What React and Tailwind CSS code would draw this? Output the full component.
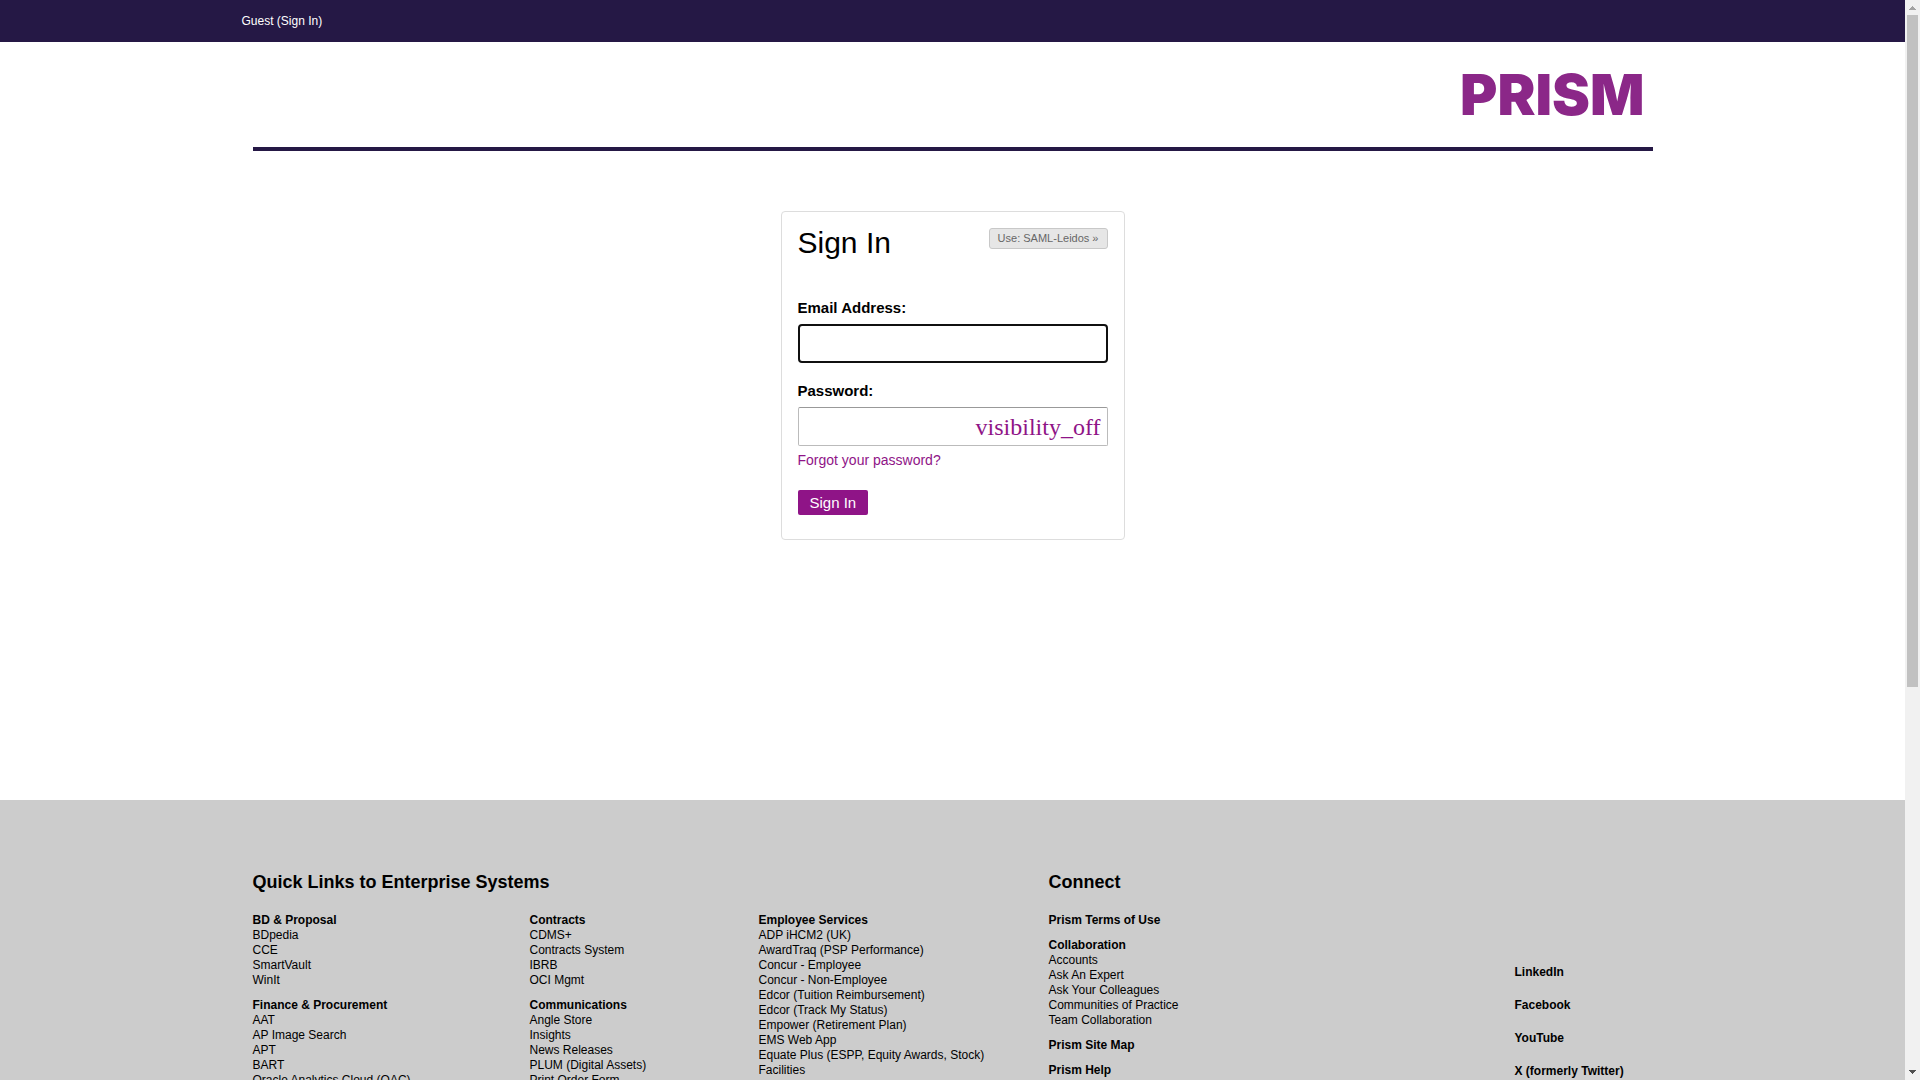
import { useState } from 'react';

const quickLinks = [
    {
        width: 'w-[277px]',
        groups: [
            { title: 'BD & Proposal', links: ['BDpedia', 'CCE', 'SmartVault', 'WinIt'] },
            {
                title: 'Finance & Procurement',
                links: ['AAT', 'AP Image Search', 'APT', 'BART', 'Oracle Analytics Cloud (OAC)'],
            },
        ],
    },
    {
        width: 'w-[229px]',
        groups: [
            { title: 'Contracts', links: ['CDMS+', 'Contracts System', 'IBRB', 'OCI Mgmt'] },
            {
                title: 'Communications',
                links: ['Angle Store', 'Insights', 'News Releases', 'PLUM (Digital Assets)', 'Print Order Form'],
            },
        ],
    },
    {
        width: 'w-[290px]',
        groups: [
            {
                title: 'Employee Services',
                links: [
                    'ADP iHCM2 (UK)',
                    'AwardTraq (PSP Performance)',
                    'Concur - Employee',
                    'Concur - Non-Employee',
                    'Edcor (Tuition Reimbursement)',
                    'Edcor (Track My Status)',
                    'Empower (Retirement Plan)',
                    'EMS Web App',
                    'Equate Plus (ESPP, Equity Awards, Stock)',
                    'Facilities',
                ],
            },
        ],
    },
];

const connectGroups = [
    { title: 'Prism Terms of Use', links: [] },
    {
        title: 'Collaboration',
        links: ['Accounts', 'Ask An Expert', 'Ask Your Colleagues', 'Communities of Practice', 'Team Collaboration'],
    },
    { title: 'Prism Site Map', links: [] },
    { title: 'Prism Help', links: [] },
];

const socialLinks = ['LinkedIn', 'Facebook', 'YouTube', 'X (formerly Twitter)'];

function LinkGroup({ title, links }) {
    return (
        <div>
            <h3 className="font-bold">
                {links.length > 0 ? title : <a href="#">{title}</a>}
            </h3>
            <ul>
                {links.map((link) => (
                    <li key={link}>
                        <a href="#">{link}</a>
                    </li>
                ))}
            </ul>
        </div>
    );
}

function TopBar() {
    return (
        <nav className="h-[42px] shrink-0 bg-[#251845] text-xs text-white">
            <div className="mx-auto flex h-full max-w-[1422px] items-center">
                <span>
                    Guest (<a href="#">Sign In</a>)
                </span>
            </div>
        </nav>
    );
}

function Header() {
    return (
        <header className="mx-auto flex h-[109px] w-full max-w-[1400px] shrink-0 items-start justify-end border-b-4 border-[#251845] pt-[25px] pr-2">
            <a href="#" className="font-['Inter',sans-serif] text-[57px] leading-[56px] font-black text-[#8b2788]">
                PRISM
            </a>
        </header>
    );
}

function SignInForm() {
    const [email, setEmail] = useState('');
    const [password, setPassword] = useState('');
    const [showPassword, setShowPassword] = useState(false);

    return (
        <form
            onSubmit={(e) => e.preventDefault()}
            className="mx-auto w-[344px] rounded-[4px] border border-[#dddddd] px-4 pt-4 pb-6"
        >
            <div className="flex items-start justify-between">
                <h1 className="text-[30px] leading-[30px]">Sign In</h1>
                <button
                    type="button"
                    className="h-[21px] rounded-[3px] border border-[#c8c8c8] bg-[#e6e6e6] px-2 text-[11px] leading-[19px] text-[#666666]"
                >
                    Use: SAML-Leidos »
                </button>
            </div>

            <label htmlFor="email" className="mt-[38px] block text-[15px] leading-6 font-bold">
                Email Address:
            </label>
            <input
                id="email"
                type="email"
                value={email}
                onChange={(e) => setEmail(e.target.value)}
                className="mt-1 block h-[39px] w-full rounded-[4px] border-2 border-[#101010] px-2 outline-none"
            />

            <label htmlFor="password" className="mt-4 block text-[15px] leading-6 font-bold">
                Password:
            </label>
            <div className="mt-1 flex h-[39px] items-center rounded-[2px] border border-[#bbbbbb] border-t-[#999999] pr-1.5">
                <input
                    id="password"
                    type={showPassword ? 'text' : 'password'}
                    value={password}
                    onChange={(e) => setPassword(e.target.value)}
                    className="h-full min-w-0 flex-1 px-2 outline-none"
                />
                <button
                    type="button"
                    onClick={() => setShowPassword(!showPassword)}
                    className="font-['Liberation_Serif',serif] text-2xl leading-6 text-[#8f1487]"
                >
                    {showPassword ? 'visibility' : 'visibility_off'}
                </button>
            </div>
            <a href="#" className="mt-1 block text-sm leading-5 text-[#8f1487]">
                Forgot your password?
            </a>

            <button
                type="submit"
                className="mt-5 block h-[25px] rounded-[2px] bg-[#8f1487] px-3 text-[15px] leading-[25px] text-white"
            >
                Sign In
            </button>
        </form>
    );
}

function Footer() {
    return (
        <footer className="shrink-0 grow bg-[#cccccc] pt-[72px] pb-16 text-xs leading-[15px]">
            <div className="mx-auto flex max-w-[1400px]">
                <section>
                    <h2 className="mb-[21px] text-lg leading-5 font-bold">Quick Links to Enterprise Systems</h2>
                    <div className="flex">
                        {quickLinks.map((column) => (
                            <div key={column.width} className={`flex flex-col gap-2.5 ${column.width}`}>
                                {column.groups.map((group) => (
                                    <LinkGroup key={group.title} {...group} />
                                ))}
                            </div>
                        ))}
                    </div>
                </section>
                <section className="flex-1">
                    <h2 className="mb-[21px] text-lg leading-5 font-bold">Connect</h2>
                    <div className="flex">
                        <div className="flex w-[466px] flex-col gap-2.5">
                            {connectGroups.map((group) => (
                                <LinkGroup key={group.title} {...group} />
                            ))}
                        </div>
                        <ul className="mt-[52px] flex flex-col gap-[18px] font-bold">
                            {socialLinks.map((link) => (
                                <li key={link}>
                                    <a href="#">{link}</a>
                                </li>
                            ))}
                        </ul>
                    </div>
                </section>
            </div>
        </footer>
    );
}

function ScrollBar() {
    return (
        <div aria-hidden="true" className="flex w-[15px] shrink-0 flex-col items-center bg-[#f1f1f1]">
            <svg width="15" height="15" viewBox="0 0 15 15" fill="#a3a3a3" shapeRendering="crispEdges">
                <path d="M7 6h1v1h1v1h1v1h1v1H4V9h1V8h1V7h1z" />
            </svg>
            <div className="w-[11px] flex-1">
                <div className="h-[64%] bg-[#c1c1c1]" />
            </div>
            <svg width="15" height="15" viewBox="0 0 15 15" fill="#505050" shapeRendering="crispEdges">
                <path d="M4 5h7v1h-1v1H9v1H8v1H7V8H6V7H5V6H4z" />
            </svg>
        </div>
    );
}

export default function App() {
    return (
        <div className="flex h-screen overflow-hidden bg-white font-['Liberation_Sans',Arial,sans-serif] text-black">
            <div className="flex min-w-0 flex-1 flex-col overflow-hidden">
                <TopBar />
                <Header />
                <main className="shrink-0 pt-[60px] pb-[260px]">
                    <SignInForm />
                </main>
                <Footer />
            </div>
            <ScrollBar />
        </div>
    );
}
